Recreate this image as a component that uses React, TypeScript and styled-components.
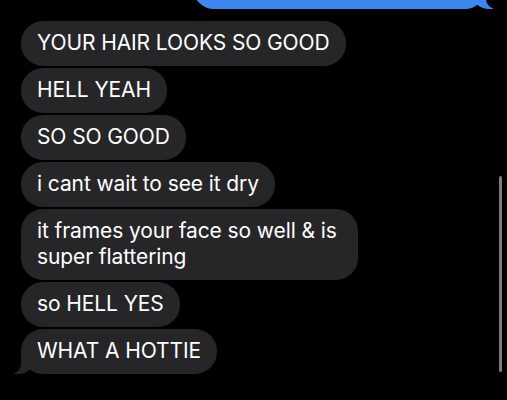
import React from "react";
import styled, { createGlobalStyle } from "styled-components";

const Global = createGlobalStyle`
  html, body { margin: 0; padding: 0; background: #000; }
  body { width: 507px; height: 400px; overflow: hidden; }
`;

const Screen = styled.div`
  position: relative;
  width: 507px;
  height: 400px;
  background: #000;
  overflow: hidden;
  font-family: Inter, "Liberation Sans", Arial, sans-serif;
`;

const Thread = styled.div`
  display: flex;
  flex-direction: column;
  align-items: flex-start;
  gap: 2px;
  padding: 0 21px 0 21px;
`;

const Bubble = styled.div<{ $sent?: boolean; $tail?: boolean }>`
  position: relative;
  box-sizing: border-box;
  max-width: 337px;
  padding: 9px 16px 10px 16px;
  border-radius: 22px;
  background: ${(p) => (p.$sent ? "#3d87f0" : "#262629")};
  color: #fff;
  font-size: 21px;
  line-height: 26px;
  letter-spacing: -0.1px;
  ${(p) =>
    p.$sent &&
    `
    align-self: flex-end;
    width: 293px;
    height: 42px;
    margin-top: -33px;
    margin-bottom: 10px;
  `}
  ${(p) =>
    p.$tail &&
    `
    &::before {
      content: "";
      position: absolute;
      bottom: 0;
      height: 24px;
      width: 20px;
      background: ${p.$sent ? "#3d87f0" : "#262629"};
      ${p.$sent ? "right: -7px; border-bottom-left-radius: 16px 14px;" : "left: -7px; border-bottom-right-radius: 16px 14px;"}
    }
    &::after {
      content: "";
      position: absolute;
      bottom: 0;
      height: 24px;
      width: 26px;
      background: #000;
      ${p.$sent ? "right: -26px; border-bottom-left-radius: 10px;" : "left: -26px; border-bottom-right-radius: 10px;"}
    }
  `}
`;

const ScrollThumb = styled.div`
  position: absolute;
  right: 5px;
  top: 176px;
  width: 3px;
  height: 196px;
  border-radius: 2px;
  background: #7c7c7c;
`;

const messages = [
  "YOUR HAIR LOOKS SO GOOD",
  "HELL YEAH",
  "SO SO GOOD",
  "i cant wait to see it dry",
  "it frames your face so well & is super flattering",
  "so HELL YES",
  "WHAT A HOTTIE",
];

export default function App() {
  return (
    <Screen>
      <Global />
      <Thread>
        <Bubble $sent $tail />
        {messages.map((m, i) => (
          <Bubble key={i} $tail={i === messages.length - 1}>
            {m}
          </Bubble>
        ))}
      </Thread>
      <ScrollThumb />
    </Screen>
  );
}
